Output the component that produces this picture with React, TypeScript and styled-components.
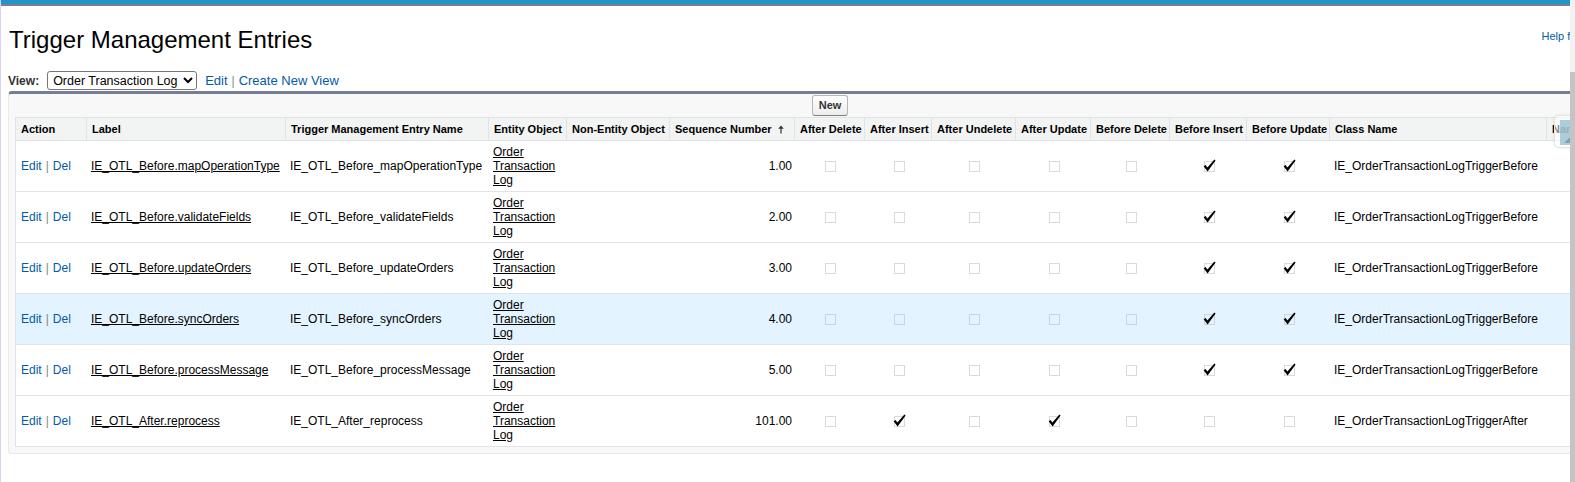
import React from "react";
import styled, { createGlobalStyle } from "styled-components";

const GlobalStyle = createGlobalStyle`
  html, body {
    margin: 0;
    padding: 0;
    background: #fff;
    overflow: hidden;
  }
  body {
    font-family: "Liberation Sans", Arial, Helvetica, sans-serif;
    font-size: 12px;
    color: #000;
  }
`;

const Frame = styled.div`
  display: flex;
  height: 482px;
`;

const LeftEdge = styled.div`
  width: 1px;
  flex: 0 0 1px;
  background: #ddd0fb;
`;

const Viewport = styled.div`
  position: relative;
  flex: 1;
  overflow: hidden;
`;

const TopBar = styled.div`
  height: 2px;
  border-top: 4px solid #1f96c4;
  background: #7b7d9a;
`;

const Page = styled.div`
  width: 1660px;
  padding: 0 0 0 7px;
`;

const PageHeader = styled.div`
  display: flex;
  align-items: center;
  justify-content: space-between;
  width: 1641px;
  margin-top: 20px;
`;

const Title = styled.h1`
  margin: 0 0 0 1px;
  font-size: 24px;
  line-height: 28px;
  font-weight: normal;
  color: #000;
`;

const HelpLink = styled.a`
  display: flex;
  align-items: center;
  gap: 4px;
  margin-top: -8px;
  font-size: 11px;
  color: #015ba7;
  text-decoration: none;
`;

const HelpIcon = styled.span`
  display: inline-flex;
  align-items: center;
  justify-content: center;
  width: 16px;
  height: 16px;
  border-radius: 50%;
  background: #f29d1e;
  color: #fff;
  font-weight: bold;
  font-size: 11px;
`;

const ViewBar = styled.div`
  display: flex;
  align-items: center;
  margin-top: 17px;
  height: 19px;
`;

const ViewLabel = styled.label`
  font-weight: bold;
  font-size: 12px;
  color: #333;
  margin-right: 8px;
`;

const ViewSelect = styled.select`
  width: 150px;
  height: 19px;
  font-family: "Liberation Sans", Arial, sans-serif;
  font-size: 12.5px;
  color: #000;
  border: 1px solid #767676;
  border-radius: 3px;
  background: #fff;
  padding: 0 0 0 1px;
  margin: 0 8px 0 0;
`;

const BlueLink = styled.a<{ $size?: number }>`
  color: #015ba7;
  text-decoration: none;
  font-size: ${(p) => p.$size ?? 12}px;
`;

const Pipe = styled.span<{ $size?: number }>`
  color: #888;
  margin: 0 4px;
  font-size: ${(p) => p.$size ?? 12}px;
`;

const Panel = styled.div`
  box-sizing: border-box;
  width: 1644px;
  margin-top: 1px;
  border: 1px solid #eaeaea;
  border-top: 3px solid #747e96;
  border-radius: 4px;
  background: #f8f8f8;
`;

const PanelHeader = styled.div`
  display: flex;
  justify-content: center;
  align-items: flex-start;
  height: 23px;
  padding-top: 1px;
  box-sizing: border-box;
`;

const Button = styled.button`
  font-family: "Liberation Sans", Arial, sans-serif;
  font-size: 11px;
  font-weight: bold;
  line-height: 13px;
  color: #333;
  padding: 3px 6px 3px;
  height: 21px;
  border: 1px solid #b5b5b5;
  border-bottom-color: #7f7f7f;
  border-radius: 3px;
  background: linear-gradient(#ffffff, #ededed);
  cursor: pointer;
`;

const PanelBody = styled.div`
  padding: 0 6px 6px 6px;
`;

const Table = styled.table`
  table-layout: fixed;
  width: 1630px;
  border-collapse: separate;
  border-spacing: 0;
  border: 1px solid #e0e3e5;
  background: #fff;
`;

const Col = styled.col<{ $w: number }>`
  width: ${(p) => p.$w}px;
`;

const Th = styled.th`
  box-sizing: border-box;
  background: #f2f3f3;
  border-bottom: 1px solid #e0e3e5;
  padding: 5px 2px 4px 5px;
  font-size: 11px;
  line-height: 13px;
  font-weight: bold;
  text-align: left;
  white-space: nowrap;
  overflow: hidden;
  color: #000;
  & + & {
    border-left: 1px solid #e0e3e5;
  }
`;

const SortArrow = styled.svg`
  margin-left: 6px;
  vertical-align: -1px;
`;

const Tr = styled.tr<{ $hl?: boolean }>`
  background: ${(p) => (p.$hl ? "#e3f3ff" : "transparent")};
  &:last-child td {
    border-bottom: none;
  }
`;

const Td = styled.td<{ $align?: "left" | "right" | "center" }>`
  box-sizing: border-box;
  padding: 4px 2px 4px 5px;
  border-bottom: 1px solid #e3e3e3;
  font-size: 12px;
  line-height: 14px;
  vertical-align: middle;
  text-align: ${(p) => p.$align ?? "left"};
  color: #000;
`;

const PlainLink = styled.a`
  color: #000;
  text-decoration: underline;
`;

const BoxIcon = styled.svg`
  display: inline-block;
  vertical-align: middle;
`;

const FloatWidget = styled.div`
  position: absolute;
  left: 1553px;
  top: 115px;
  width: 30px;
  height: 33px;
  box-sizing: border-box;
  padding: 4px 0 0 5px;
  background: rgba(255, 255, 255, 0.55);
  border: 1px solid #e4e4e4;
  border-radius: 5px;
  box-shadow: 0 0 3px rgba(0, 0, 0, 0.1);
`;

const WidgetTile = styled.div`
  position: relative;
  width: 24px;
  height: 25px;
  background: rgba(150, 188, 208, 0.75);
  overflow: hidden;
  &::after {
    content: "";
    position: absolute;
    right: 12px;
    bottom: 2px;
    border-left: 8px solid transparent;
    border-bottom: 8px solid rgba(120, 140, 152, 0.7);
  }
`;

const ScrollTrack = styled.div`
  flex: 0 0 5px;
  display: flex;
  flex-direction: column;
  background: #f1f1f1;
`;

const ScrollThumb = styled.div`
  margin-top: 72px;
  flex: 1;
  background: #c4c4c4;
`;

const Unchecked = () => (
  <BoxIcon width="15" height="14" viewBox="0 0 15 14">
    <rect x="2.5" y="2.5" width="10" height="10" fill="none" stroke="#b4b4b4" strokeDasharray="1 1" />
  </BoxIcon>
);

const Checked = () => (
  <BoxIcon width="15" height="14" viewBox="0 0 15 14">
    <rect x="2.5" y="2.5" width="10" height="10" fill="none" stroke="#b4b4b4" strokeDasharray="1 1" />
    <path d="M1.6 7.2 L3.6 6 L5.4 8.6 L12.4 0.6 L13.6 1.4 L5.6 12.4 Z" fill="#000" />
  </BoxIcon>
);

type Flags = [boolean, boolean, boolean, boolean, boolean, boolean, boolean];

interface Entry {
  label: string;
  name: string;
  seq: string;
  flags: Flags;
  className: string;
}

const before: Flags = [false, false, false, false, false, true, true];
const after: Flags = [false, true, false, true, false, false, false];

const entries: Entry[] = [
  { label: "IE_OTL_Before.mapOperationType", name: "IE_OTL_Before_mapOperationType", seq: "1.00", flags: before, className: "IE_OrderTransactionLogTriggerBefore" },
  { label: "IE_OTL_Before.validateFields", name: "IE_OTL_Before_validateFields", seq: "2.00", flags: before, className: "IE_OrderTransactionLogTriggerBefore" },
  { label: "IE_OTL_Before.updateOrders", name: "IE_OTL_Before_updateOrders", seq: "3.00", flags: before, className: "IE_OrderTransactionLogTriggerBefore" },
  { label: "IE_OTL_Before.syncOrders", name: "IE_OTL_Before_syncOrders", seq: "4.00", flags: before, className: "IE_OrderTransactionLogTriggerBefore" },
  { label: "IE_OTL_Before.processMessage", name: "IE_OTL_Before_processMessage", seq: "5.00", flags: before, className: "IE_OrderTransactionLogTriggerBefore" },
  { label: "IE_OTL_After.reprocess", name: "IE_OTL_After_reprocess", seq: "101.00", flags: after, className: "IE_OrderTransactionLogTriggerAfter" },
];

const columns: [string, number][] = [
  ["Action", 70],
  ["Label", 199],
  ["Trigger Management Entry Name", 203],
  ["Entity Object", 78],
  ["Non-Entity Object", 103],
  ["Sequence Number", 125],
  ["After Delete", 70],
  ["After Insert", 67],
  ["After Undelete", 84],
  ["After Update", 75],
  ["Before Delete", 79],
  ["Before Insert", 77],
  ["Before Update", 83],
  ["Class Name", 217],
  ["Namespace", 100],
];

export default function App() {
  return (
    <>
      <GlobalStyle />
      <Frame>
        <LeftEdge />
        <Viewport>
          <TopBar />
          <Page>
            <PageHeader>
              <Title>Trigger Management Entries</Title>
              <HelpLink href="#">
                Help for this Page <HelpIcon>?</HelpIcon>
              </HelpLink>
            </PageHeader>

            <ViewBar>
              <ViewLabel>View:</ViewLabel>
              <ViewSelect defaultValue="otl">
                <option value="otl">Order Transaction Log</option>
                <option value="all">All</option>
              </ViewSelect>
              <BlueLink href="#" $size={13}>Edit</BlueLink>
              <Pipe $size={12}>|</Pipe>
              <BlueLink href="#" $size={13}>Create New View</BlueLink>
            </ViewBar>

            <Panel>
              <PanelHeader>
                <Button type="button">New</Button>
              </PanelHeader>
              <PanelBody>
                <Table>
                  <colgroup>
                    {columns.map(([name, w]) => (
                      <Col key={name} $w={w} />
                    ))}
                  </colgroup>
                  <thead>
                    <tr>
                      {columns.map(([name]) => (
                        <Th key={name}>
                          {name}
                          {name === "Sequence Number" && (
                            <SortArrow width="6" height="9" viewBox="0 0 6 9">
                              <path d="M3 0.5 L5.8 3.8 H3.6 V8.5 H2.4 V3.8 H0.2 Z" fill="#333" />
                            </SortArrow>
                          )}
                        </Th>
                      ))}
                    </tr>
                  </thead>
                  <tbody>
                    {entries.map((e, i) => (
                      <Tr key={e.label} $hl={i === 3}>
                        <Td>
                          <BlueLink href="#">Edit</BlueLink>
                          <Pipe>|</Pipe>
                          <BlueLink href="#">Del</BlueLink>
                        </Td>
                        <Td>
                          <PlainLink href="#">{e.label}</PlainLink>
                        </Td>
                        <Td>{e.name}</Td>
                        <Td>
                          <PlainLink href="#">Order Transaction Log</PlainLink>
                        </Td>
                        <Td />
                        <Td $align="right">{e.seq}</Td>
                        {e.flags.map((f, k) => (
                          <Td key={k} $align="center">
                            {f ? <Checked /> : <Unchecked />}
                          </Td>
                        ))}
                        <Td>{e.className}</Td>
                        <Td />
                      </Tr>
                    ))}
                  </tbody>
                </Table>
              </PanelBody>
            </Panel>
          </Page>
          <FloatWidget>
            <WidgetTile />
          </FloatWidget>
        </Viewport>
        <ScrollTrack>
          <ScrollThumb />
        </ScrollTrack>
      </Frame>
    </>
  );
}
